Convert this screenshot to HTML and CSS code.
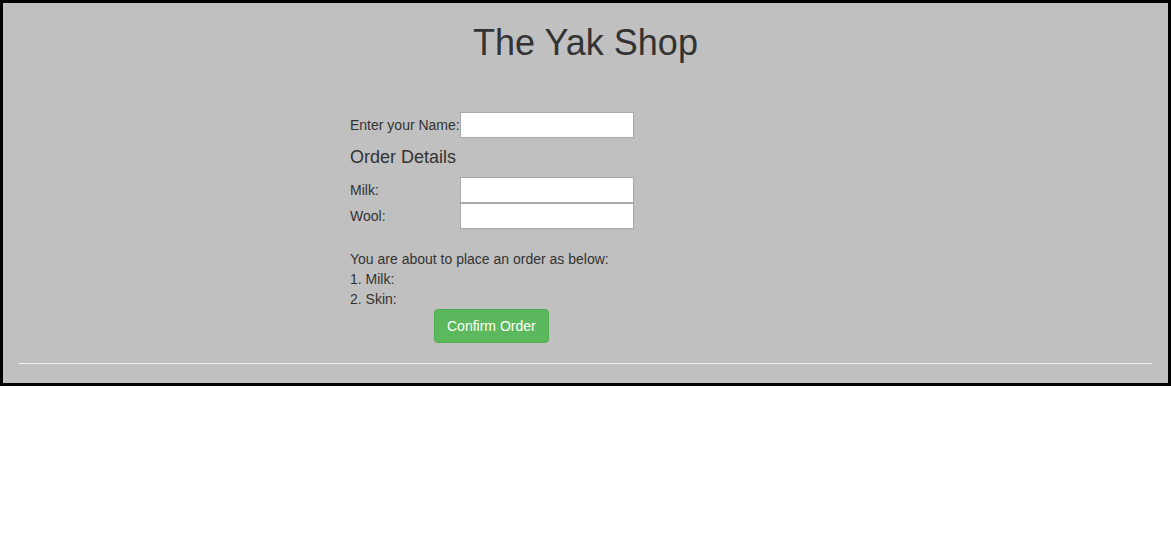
FILE: index.html
```html
<!DOCTYPE html>
<html>
<head>
<meta charset="utf-8">
<title>The Yak Shop</title>
<link rel="stylesheet" href="styles.css">
</head>
<body>
<div class="frame">
  <h1 class="title">The Yak Shop</h1>
  <form class="order-form">
    <div class="row name-row">
      <label class="lbl">Enter your Name:</label>
      <input class="field" type="text">
    </div>
    <h4 class="section">Order Details</h4>
    <div class="row">
      <label class="lbl">Milk:</label>
      <input class="field" type="text">
    </div>
    <div class="row">
      <label class="lbl">Wool:</label>
      <input class="field" type="text">
    </div>
    <div class="summary">
      <div>You are about to place an order as below:</div>
      <div>1. Milk:</div>
      <div>2. Skin:</div>
    </div>
    <button type="button" class="btn-confirm">Confirm Order</button>
  </form>
  <hr class="divider">
</div>
</body>
</html>
```
FILE: styles.css
```css
html, body {
  margin: 0;
  padding: 0;
  background: #ffffff;
}
body {
  font-family: "Liberation Sans", Arial, Helvetica, sans-serif;
  font-size: 14px;
  line-height: 20px;
  color: #333333;
}
.frame {
  border: 3px solid #000000;
  background: #c0c0c0;
  padding: 0 16px;
  box-sizing: border-box;
  width: 1171px;
  height: 386px;
  overflow: hidden;
}
.title {
  margin: 20px 0 10px;
  font-size: 36px;
  line-height: 39.6px;
  font-weight: 500;
  text-align: center;
  color: #333333;
}
.order-form {
  margin: 49px 0 0 331px;
  display: flex;
  flex-direction: column;
  align-items: flex-start;
}
.row {
  display: flex;
  align-items: center;
  height: 26px;
}
.lbl {
  width: 110px;
  flex: none;
}
.field {
  width: 174px;
  height: 26px;
  box-sizing: border-box;
  border: 1px solid #a9a9a9;
  background: #ffffff;
  margin: 0;
  padding: 1px 2px;
  font: inherit;
}
.section {
  margin: 10px 0 10px;
  font-size: 18px;
  line-height: 19.8px;
  font-weight: 500;
}
.summary {
  margin-top: 20px;
}
.btn-confirm {
  margin-left: 84px;
  height: 34px;
  padding: 6px 12px;
  font: inherit;
  font-size: 14px;
  line-height: 20px;
  color: #ffffff;
  background: #5cb85c;
  border: 1px solid #4cae4c;
  border-radius: 4px;
}
.divider {
  margin: 20px 0 0;
  border: 0;
  border-top: 1px solid #eeeeee;
  height: 0;
}
```
